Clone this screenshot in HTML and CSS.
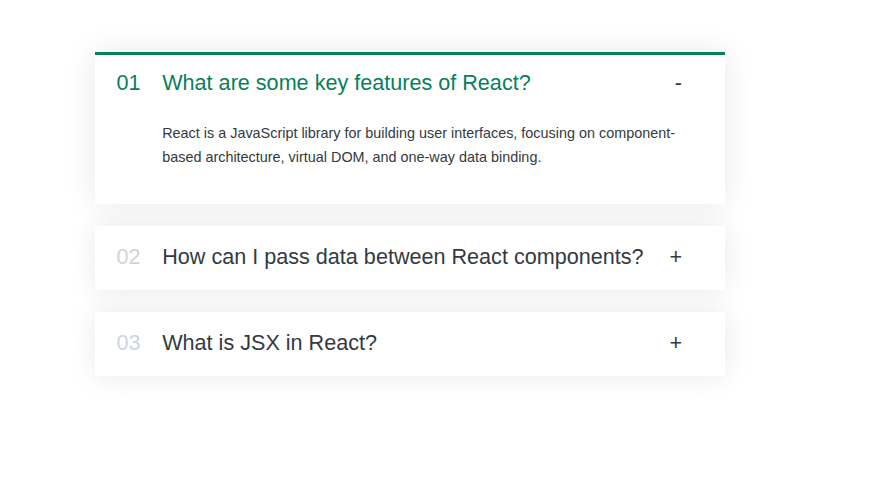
FILE: index.html
```html
<!DOCTYPE html>
<html lang="en">
<head>
<meta charset="utf-8">
<title>Accordion</title>
<link rel="stylesheet" href="styles.css">
</head>
<body>
<div class="accordion">
  <div class="item open">
    <p class="number">01</p>
    <p class="title">What are some key features of React?</p>
    <p class="icon">-</p>
    <div class="content-box">React is a JavaScript library for building user interfaces, focusing on component-based architecture, virtual DOM, and one-way data binding.</div>
  </div>
  <div class="item">
    <p class="number">02</p>
    <p class="title">How can I pass data between React components?</p>
    <p class="icon">+</p>
  </div>
  <div class="item">
    <p class="number">03</p>
    <p class="title">What is JSX in React?</p>
    <p class="icon">+</p>
  </div>
</div>
</body>
</html>
```

FILE: styles.css
```css
* {
  margin: 0;
  padding: 0;
  box-sizing: border-box;
}

html,
body {
  min-height: 100%;
}

body {
  font-family: "Liberation Sans", Arial, sans-serif;
  color: #343a40;
  background: #fff;
  padding: 52px 0 80px 95px;
}

.accordion {
  width: 630px;
  display: flex;
  flex-direction: column;
  gap: 22px;
}

.item {
  background: #fff;
  box-shadow: 0 0 29px rgba(0, 0, 0, 0.09);
  padding: 15px 43px 17px 21.6px;
  border-top: 3px solid #fff;
  border-bottom: 3px solid #fff;
  display: grid;
  grid-template-columns: auto 1fr auto;
  column-gap: 21.6px;
  row-gap: 25px;
  align-items: center;
}

.number {
  font-size: 21.6px;
  color: #ced4da;
}

.title,
.icon {
  font-size: 21.6px;
}

.content-box {
  grid-column: 2 / -1;
  font-size: 14.4px;
  line-height: 24px;
  padding-bottom: 15px;
}

.open {
  border-top: 3px solid #087f5b;
}

.open .number,
.open .title {
  color: #087f5b;
}
```
